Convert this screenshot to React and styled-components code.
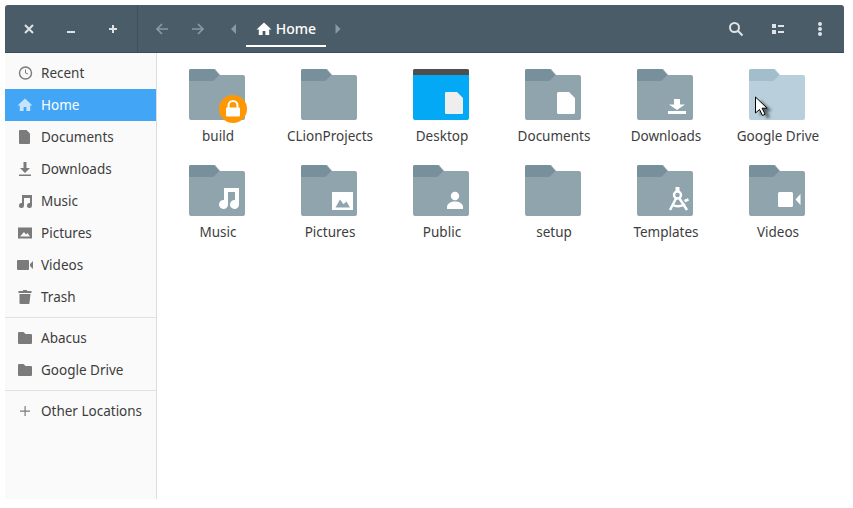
import React from 'react';
import styled, { createGlobalStyle } from 'styled-components';

const GlobalStyle = createGlobalStyle`
  html, body { margin: 0; padding: 0; background: #fff; }
  body { font-family: "Noto Sans", "Open Sans", sans-serif; overflow: hidden; }
`;

// --- Window ---
const Win = styled.div`
  position: relative;
  margin: 5px 0 0 5px;
  width: 839px;
  height: 494px;
  display: flex;
  flex-direction: column;
  background: #fff;
`;

const HeaderBar = styled.header`
  height: 48px;
  flex: none;
  display: flex;
  align-items: stretch;
  background: #495c67;
  border-radius: 3px 3px 0 0;
  border-bottom: 1px solid #3c4b54;
  box-sizing: border-box;
  color: #fff;
`;

const WindowButtons = styled.div`
  width: 133px;
  flex: none;
  display: flex;
  align-items: center;
  padding-left: 3px;
  box-sizing: border-box;
  border-right: 1px solid #3f505a;
`;

const HeadButton = styled.div`
  width: ${p => p.$w || 42}px;
  height: 47px;
  box-sizing: border-box;
  padding-top: 1px;
  flex: none;
  display: flex;
  align-items: center;
  justify-content: center;
  color: ${p => p.$dim ? '#8b99a1' : '#dfe3e6'};
`;

const Nav = styled.div`
  flex: 1;
  display: flex;
  align-items: flex-start;
  padding-left: 6px;
`;

const PathTab = styled.div`
  width: 80px;
  height: 42px;
  box-sizing: border-box;
  flex: none;
  display: flex;
  align-items: center;
  justify-content: center;
  gap: 4px;
  font-size: 14px;
  font-weight: 500;
  color: #fff;
  padding-top: 8px;
  border-bottom: 2px solid #fff;
`;

const PathText = styled.span`
  padding-bottom: 2px;
`;

const Tools = styled.div`
  display: flex;
  align-items: center;
  padding-right: 3px;
`;

// --- Body ---
const Content = styled.div`
  flex: 1;
  display: flex;
  min-height: 0;
`;

const Sidebar = styled.nav`
  width: 152px;
  flex: none;
  box-sizing: border-box;
  background: #fafafa;
  border-right: 1px solid #dcdcdc;
  padding-top: 4px;
`;

const Place = styled.div`
  height: 32px;
  box-sizing: border-box;
  display: flex;
  align-items: center;
  padding-left: 12px;
  gap: 8px;
  font-size: 13.5px;
  color: ${p => p.$active ? '#fff' : '#3d3d3d'};
  background: ${p => p.$active ? '#42a5f5' : 'transparent'};
`;

const PlaceIcon = styled.span`
  width: 16px;
  height: 16px;
  flex: none;
  display: flex;
  color: ${p => p.$active ? '#c6e4fc' : '#7b7b7b'};
`;

const Divider = styled.div`
  height: 1px;
  margin: 4px 0;
  background: #e2e2e2;
`;

const Grid = styled.main`
  flex: 1;
  display: grid;
  grid-template-columns: repeat(6, 112px);
  grid-auto-rows: 96px;
  align-content: start;
  padding: 12px 0 0 4px;
`;

const Item = styled.div`
  display: flex;
  flex-direction: column;
  align-items: center;
  padding-top: 4px;
  box-sizing: border-box;
`;

const FolderBox = styled.div`
  position: relative;
  width: 56px;
  height: 51px;
`;

const Label = styled.div`
  margin-top: 7px;
  padding-left: 2px;
  font-size: 13.5px;
  line-height: 18px;
  color: #3d3d3d;
  white-space: nowrap;
`;

const Badge = styled.svg`
  position: absolute;
  left: 30px;
  top: 26px;
`;

const Cursor = styled.svg`
  position: absolute;
  left: 749px;
  top: 90px;
`;

// --- Drawings ---
const Ico = ({ children, size = 16 }) => (
  <svg width={size} height={size} viewBox="0 0 16 16" fill="currentColor">
    {children}
  </svg>
);

const HomeGlyph = () => <path d="M8 1.500 0.500 8.500h2.300V14h3.800v-4h2.800v4h3.800V8.500h2.300z" />;
const DocGlyph = () => <path d="M3 1h6.500L13 4.500V14a1 1 0 0 1-1 1H3a1 1 0 0 1-1-1V2a1 1 0 0 1 1-1z" />;
const DownGlyph = () => <path d="M6.500 1h3v6H13L8 12 3 7h3.500zM2 13.500h12V15H2z" />;
const MusicGlyph = () => <path d="M5 2h10v10.500a2.500 2.500 0 1 1-2-2.450V5H7v7.500a2.500 2.500 0 1 1-2-2.450z" />;
const PictureGlyph = () => <path fillRule="evenodd" d="M1 2.500h14v11H1zM3 11.500h10L10.500 8 9 9.500 7 7z" />;
const VideoGlyph = () => <path d="M1 3h10a1 1 0 0 1 1 1v8a1 1 0 0 1-1 1H1a1 1 0 0 1-1-1V4a1 1 0 0 1 1-1zM13 7l3-3v8l-3-3z" />;
const TrashGlyph = () => <path d="M6 1h4v1h4.500v2h-13V2H6zM2.500 5h11l-1 9a1 1 0 0 1-1 1h-8a1 1 0 0 1-1-1z" />;
const SmallFolder = () => <path d="M1 3a1 1 0 0 1 1-1h4.500l2 2H14a1 1 0 0 1 1 1v8a1 1 0 0 1-1 1H2a1 1 0 0 1-1-1z" />;

const PLACES = {
  recent: <g><circle cx="8.500" cy="8" r="6" fill="none" stroke="currentColor" strokeWidth="1.400" /><path d="M8.500 4.500V8l2.500 1" fill="none" stroke="currentColor" /></g>,
  home: <HomeGlyph />,
  doc: <DocGlyph />,
  down: <DownGlyph />,
  music: <MusicGlyph />,
  picture: <PictureGlyph />,
  video: <VideoGlyph />,
  trash: <TrashGlyph />,
  folder: <SmallFolder />,
  plus: <path d="M7.500 3h1.200v4.500H13v1.200H8.700V13H7.500V8.700H3V7.500h4.500z" />,
};

// corner badges, coordinates are in the 56x51 folder box
const GLYPHS = {
  doc: <path d="M33.500 23H44l6 6v14.500a1.500 1.500 0 0 1-1.500 1.500h-15a1.500 1.500 0 0 1-1.500-1.500v-19a1.500 1.500 0 0 1 1.500-1.500z" fill="#fff" />,
  desktopDoc: <path d="M33 23h11l6 6v15a1 1 0 0 1-1 1H33a1 1 0 0 1-1-1V24a1 1 0 0 1 1-1z" fill="#eeeeee" />,
  down: <path d="M37 30h6v5.500h5L40 41l-8-5.500h5zM31 42h18v3H31z" fill="#fff" />,
  music: <path d="M35 23h15v16.500a4.500 4.500 0 1 1-4-4.400V27h-7v12.500a4.500 4.500 0 1 1-4-4.400z" fill="#fff" />,
  picture: <path fillRule="evenodd" d="M31 27h21v18H31zM34.500 42.500h14.500l-3.600-6-2.900 2.800-3.500-4.800z" fill="#fff" />,
  person: <g fill="#fff"><circle cx="42" cy="31" r="4.200" /><path d="M34 42c0-3.500 4-5.500 8-5.500s8 2 8 5.500v2H34z" /></g>,
  template: (
    <g fill="none" stroke="#fff" strokeWidth="2.500">
      <circle cx="40.500" cy="30" r="3.500" />
      <path d="M39 33.500 33 45M42.500 33.500 50 45M35 39.500c3.500 2.500 9 2.500 13-.5M47.500 36l4-1.500" />
      <path d="M38.500 22h4v5h-4z" fill="#fff" stroke="none" />
    </g>
  ),
  video: <path d="M30.500 27h12a1.500 1.500 0 0 1 1.500 1.500v12a1.500 1.500 0 0 1-1.500 1.500h-12a1.500 1.500 0 0 1-1.500-1.500v-12a1.500 1.500 0 0 1 1.500-1.500zM46.500 34.500l5-5.500v11z" fill="#fff" />,
};

const Folder = ({ glyph, pale }) => (
  <svg width="56" height="51" viewBox="0 0 56 51">
    <path d="M2 0h24l5 6h23a2 2 0 0 1 2 2v41a2 2 0 0 1-2 2H2a2 2 0 0 1-2-2V2a2 2 0 0 1 2-2z" fill={pale ? '#b9d0dc' : '#90a4ae'} />
    <path d="M2 0h22.500l6 6-6 6H0V2a2 2 0 0 1 2-2z" fill={pale ? '#a2bdcb' : '#78909c'} />
    {glyph && GLYPHS[glyph]}
  </svg>
);

const DesktopFolder = () => (
  <svg width="56" height="51" viewBox="0 0 56 51">
    <rect width="56" height="51" rx="2" fill="#03a9f4" />
    <path d="M2 0h52a2 2 0 0 1 2 2v4H0V2a2 2 0 0 1 2-2z" fill="#4e4e4e" />
    {GLYPHS.desktopDoc}
  </svg>
);

const LockBadge = () => (
  <Badge width="28" height="28" viewBox="0 0 28 28">
    <circle cx="14" cy="14" r="14" fill="#ff9800" />
    <path d="M9.500 13V10.500a4.500 4.500 0 0 1 9 0V13" fill="none" stroke="#fff" strokeWidth="2" />
    <rect x="7" y="12.500" width="14" height="9" rx="1" fill="#fff" />
  </Badge>
);

const sidebarTop = [
  ['recent', 'Recent'], ['home', 'Home', true], ['doc', 'Documents'], ['down', 'Downloads'],
  ['music', 'Music'], ['picture', 'Pictures'], ['video', 'Videos'], ['trash', 'Trash'],
];

const items = [
  { name: 'build', lock: true }, { name: 'CLionProjects' }, { name: 'Desktop', desktop: true },
  { name: 'Documents', glyph: 'doc' }, { name: 'Downloads', glyph: 'down' }, { name: 'Google Drive', pale: true },
  { name: 'Music', glyph: 'music' }, { name: 'Pictures', glyph: 'picture' }, { name: 'Public', glyph: 'person' },
  { name: 'setup' }, { name: 'Templates', glyph: 'template' }, { name: 'Videos', glyph: 'video' },
];

const PlaceRow = ({ icon, name, active }) => (
  <Place $active={active}>
    <PlaceIcon $active={active}><Ico>{PLACES[icon]}</Ico></PlaceIcon>
    <span>{name}</span>
  </Place>
);

const App = () => (
  <Win>
    <GlobalStyle />
    <HeaderBar>
      <WindowButtons>
        <HeadButton><Ico><path d="m4 4 8 8M12 4l-8 8" stroke="currentColor" strokeWidth="2" /></Ico></HeadButton>
        <HeadButton><Ico><path d="M4 10h8v2H4z" /></Ico></HeadButton>
        <HeadButton><Ico><path d="M7 4h2v3h3v2H9v3H7V9H4V7h3z" /></Ico></HeadButton>
      </WindowButtons>
      <Nav>
        <HeadButton $w={36} $dim><Ico><path d="M8 3 3 8l5 5M3 8h11" fill="none" stroke="currentColor" strokeWidth="1.700" /></Ico></HeadButton>
        <HeadButton $w={36} $dim><Ico><path d="m8 3 5 5-5 5M13 8H2" fill="none" stroke="currentColor" strokeWidth="1.700" /></Ico></HeadButton>
        <HeadButton $w={30} $dim><Ico><path d="M13 3v10L8 8z" /></Ico></HeadButton>
        <PathTab>
          <Ico><HomeGlyph /></Ico>
          <PathText>Home</PathText>
        </PathTab>
        <HeadButton $w={24} $dim><Ico><path d="M5.500 3v10l5-5z" /></Ico></HeadButton>
      </Nav>
      <Tools>
        <HeadButton><Ico><circle cx="6.500" cy="6.500" r="4.500" fill="none" stroke="currentColor" strokeWidth="2" /><path d="m9.800 9.800 4.700 4.700" stroke="currentColor" strokeWidth="2" /></Ico></HeadButton>
        <HeadButton><Ico><path d="M2 3h4v4H2zM2 9h4v4H2zM8 4h6v2H8zM8 10h6v2H8z" /></Ico></HeadButton>
        <HeadButton><Ico><circle cx="8" cy="3" r="2" /><circle cx="8" cy="8" r="2" /><circle cx="8" cy="13" r="2" /></Ico></HeadButton>
      </Tools>
    </HeaderBar>
    <Content>
      <Sidebar>
        {sidebarTop.map(([icon, name, active]) => <PlaceRow key={name} icon={icon} name={name} active={active} />)}
        <Divider />
        <PlaceRow icon="folder" name="Abacus" />
        <PlaceRow icon="folder" name="Google Drive" />
        <Divider />
        <PlaceRow icon="plus" name="Other Locations" />
      </Sidebar>
      <Grid>
        {items.map(it => (
          <Item key={it.name}>
            <FolderBox>
              {it.desktop ? <DesktopFolder /> : <Folder glyph={it.glyph} pale={it.pale} />}
              {it.lock && <LockBadge />}
            </FolderBox>
            <Label>{it.name}</Label>
          </Item>
        ))}
      </Grid>
    </Content>
    <Cursor width="20" height="26" viewBox="0 0 20 26">
      <defs>
        <filter id="curShadow" x="-40%" y="-40%" width="200%" height="200%"><feGaussianBlur stdDeviation="1.500" /></filter>
      </defs>
      <path d="M4 4v16l4-3.500 3 6 3-1.500-3-6h5z" fill="#000" opacity=".55" filter="url(#curShadow)" transform="translate(2 1)" />
      <path d="M1.500 2v16l4-3.500 3 6 2.600-1.300-3-6h5z" fill="#fff" stroke="#000" strokeWidth="1" />
    </Cursor>
  </Win>
);

export default App;
